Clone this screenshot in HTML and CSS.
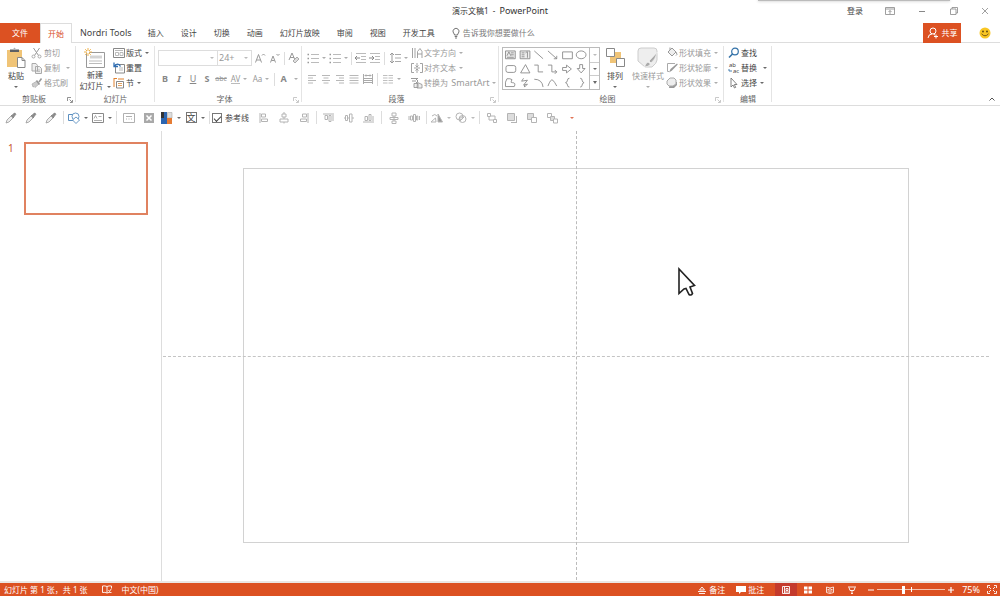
FILE: index.html
```html
<!DOCTYPE html>
<html lang="zh-CN">
<head>
<meta charset="utf-8">
<title>演示文稿1 - PowerPoint</title>
<link rel="stylesheet" href="styles.css">
</head>
<body>
<svg class="defs" aria-hidden="true">
  <symbol id="dropper" viewBox="0 0 12 12"><path d="M1 11l1-3 4-4 2 2-4 4z" fill="#eee" stroke="#999" stroke-width=".8"/><path d="M6 3l3 3M6.500 4L9 1.300q1.500-.5 1.800 1L8.300 5.500z" fill="#8a8a8a" stroke="#8a8a8a"/></symbol>
  <symbol id="bul" viewBox="0 0 12 12"><path d="M4 2.500h8M4 6.500h8M4 10.500h8" stroke="#bbb"/><path d="M.5 2.500H2M.5 6.500H2M.5 10.500H2" stroke="#999" stroke-width="1.400"/></symbol>
  <symbol id="indent" viewBox="0 0 12 12"><path d="M1 1.500h10M6 4.500h5M6 7.500h5M1 10.500h10" stroke="#bbb"/><path d="M0 6h5M3 4l2 2-2 2" stroke="#888" fill="none"/></symbol>
  <symbol id="outdent" viewBox="0 0 12 12"><path d="M1 1.500h10M6 4.500h5M6 7.500h5M1 10.500h10" stroke="#bbb"/><path d="M0 6h5M2 4L0 6l2 2" stroke="#888" fill="none"/></symbol>
  <symbol id="lsp" viewBox="0 0 12 12"><path d="M6 2.500h6M6 6h6M6 9.500h6" stroke="#aaa"/><path d="M3 1v10M1 3l2-2 2 2M1 9l2 2 2-2" stroke="#999" fill="none"/></symbol>
  <symbol id="al" viewBox="0 0 12 12"><path d="M2 2.500h8M2 5h5M2 7.500h8M2 10h5" stroke="#b0b0b0" stroke-width=".9"/></symbol>
  <symbol id="ac" viewBox="0 0 12 12"><path d="M2 2.500h8M3.500 5h5M2 7.500h8M3.500 10h5" stroke="#b0b0b0" stroke-width=".9"/></symbol>
  <symbol id="ar" viewBox="0 0 12 12"><path d="M2 2.500h8M5 5h5M2 7.500h8M5 10h5" stroke="#b0b0b0" stroke-width=".9"/></symbol>
  <symbol id="aj" viewBox="0 0 12 12"><path d="M1.500 2.500h9M1.500 5h9M1.500 7.500h9M1.500 10h9" stroke="#b0b0b0" stroke-width=".9"/></symbol>
  <symbol id="cols" viewBox="0 0 12 12"><path d="M1 2.500h4.500M1 5h4.500M1 7.500h4.500M1 10h4.500M6.500 2.500H11M6.500 5H11M6.500 7.500H11M6.500 10H11" stroke="#b8b8b8" stroke-width=".9"/></symbol>
  <symbol id="launch" viewBox="0 0 6 6"><path d="M.5 4V.5H4M2.500 2.500L5 5M5.500 3v2.500H3" fill="none" stroke="currentColor" stroke-width=".8"/></symbol>
</svg>
<div class="app">
  <header class="titlebar">
    <span class="top-shadow"></span>
    <h1>演示文稿1 &nbsp;-&nbsp; <span class="latin">PowerPoint</span></h1>
    <div class="window">
      <button class="login">登录</button>
      <button aria-label="功能区显示选项"><svg viewBox="0 0 10 8" width="10" height="8"><path d="M.5.5h9v7h-9zM.5 2h9M5 7V3.500M3.500 5L5 3.500 6.500 5" fill="none" stroke="#888" stroke-width=".8"/></svg></button>
      <button aria-label="最小化"><svg viewBox="0 0 8 8" width="8" height="8"><path d="M1 4.500h6" stroke="#888"/></svg></button>
      <button aria-label="还原"><svg viewBox="0 0 8 8" width="8" height="8"><path d="M.5 2h5.500v5.500H.5zM2 2V.5h5.500V6H6" fill="none" stroke="#888" stroke-width=".8"/></svg></button>
      <button class="close" aria-label="关闭"><svg viewBox="0 0 8 8" width="8" height="8"><path d="M1 1l6 6M7 1L1 7" stroke="#888" stroke-width=".8"/></svg></button>
    </div>
  </header>

  <nav class="tabs">
    <button class="tab file">文件</button>
    <button class="tab active">开始</button>
    <button class="tab nordri"><span class="latin">Nordri Tools</span></button>
    <button class="tab">插入</button>
    <button class="tab">设计</button>
    <button class="tab">切换</button>
    <button class="tab">动画</button>
    <button class="tab">幻灯片放映</button>
    <button class="tab">审阅</button>
    <button class="tab">视图</button>
    <button class="tab">开发工具</button>
    <button class="tell"><svg viewBox="0 0 8 12" width="8" height="12"><path d="M2.500 8Q2.500 7 1.500 6A3 3 0 1 1 6.500 6Q5.500 7 5.500 8zM2.700 9.500h2.600M3 11h2" fill="none" stroke="#666" stroke-width=".9"/></svg>告诉我你想要做什么</button>
    <button class="share"><svg viewBox="0 0 12 12" width="12" height="12"><circle cx="6" cy="4" r="3" fill="none" stroke="#fff"/><path d="M1 11q.5-4 4-4M6.500 7.200L8 8M7 9.500h4M9 7.500v4" fill="none" stroke="#fff"/></svg>共享</button>
    <button class="smile" aria-label="反馈"><svg viewBox="0 0 12 12" width="12" height="12"><circle cx="6" cy="6" r="5.500" fill="#f9c623"/><circle cx="4" cy="4.500" r=".9" fill="#574111"/><circle cx="8" cy="4.500" r=".9" fill="#574111"/><path d="M2.500 6.800q3.500 4 7 0" fill="none" stroke="#7b5a10"/></svg></button>
  </nav>

  <section class="ribbon">
    <div class="group clipboard">
      <div class="body">
        <button class="big paste"><svg viewBox="0 0 20 21" width="20" height="21"><path d="M1 3h15v17H1z" fill="#f0c477"/><path d="M4 5V2.500h3Q8.500-1 10 2.500h3V5z" fill="#5d6064"/><path d="M7 2h3" stroke="#fff"/><path d="M11.500 10.500h4.500l3 3v7h-7.500z" fill="#fff" stroke="#888"/><path d="M16 10.500v3h3" fill="none" stroke="#888"/></svg>粘贴<i class="caret"></i></button>
        <div class="rows">
          <button disabled><svg viewBox="0 0 12 12" width="12" height="12"><path d="M2.500 1l5 7.500M8.500 1l-5 7.500" stroke="#999" fill="none"/><circle cx="2.500" cy="9.500" r="1.500" fill="none" stroke="#aaa"/><circle cx="8.500" cy="9.500" r="1.500" fill="none" stroke="#aaa"/></svg>剪切</button>
          <button disabled><svg viewBox="0 0 12 12" width="12" height="12"><path d="M1 1.500h4l1.500 2V9H1zM4.500 4.500h4l2 2v5h-6z" fill="#eee" stroke="#aaa"/><path d="M6 8h3M6 9.500h3" stroke="#aaa" stroke-width=".7"/></svg>复制<i class="caret far"></i></button>
          <button disabled><svg viewBox="0 0 12 12" width="12" height="12"><path d="M1 7l5-3 2 3-4 3.500-1-1-1 .5z" fill="#ccc" stroke="#aaa" stroke-width=".7"/><path d="M5.500 3.500l3 4M8 5l2.500-3.500" stroke="#999" stroke-width="1.500"/></svg>格式刷</button>
        </div>
      </div>
      <footer>剪贴板<button class="launcher" aria-label="剪贴板选项"><svg width="6" height="6"><use href="#launch"/></svg></button></footer>
    </div>

    <div class="group slides">
      <div class="body">
        <button class="big new"><svg viewBox="0 0 22 21" width="22" height="21"><path d="M2.500 4.500h18v15h-18z" fill="#fff" stroke="#999"/><path d="M6 7.500h12v3H6z" fill="#d4d4d4"/><path d="M5 13h13M5 15.500h13" stroke="#bbb"/><path d="M4 0v8M0 4h8M1.200 1.200l5.600 5.600M6.800 1.200L1.200 6.800" stroke="#efb34e"/><circle cx="4" cy="4" r="1.300" fill="#fff"/></svg><span>新建<br>幻灯片<i class="caret inline"></i></span></button>
        <div class="rows">
          <button><svg viewBox="0 0 12 12" width="12" height="12"><path d="M.5 1.500h11v9H.5z" fill="#fff" stroke="#888"/><path d="M2 3.500h8M2.500 5.500h3v3h-3zM7 5.500h3v3H7z" stroke="#aaa" fill="none" stroke-width=".8"/></svg>版式<i class="caret"></i></button>
          <button><svg viewBox="0 0 12 12" width="12" height="12"><path d="M2.500 2.500h9v8.500h-9z" fill="#fff" stroke="#888"/><path d="M6 6h4M6 8h4" stroke="#bbb"/><path d="M1 .5v4h4M1.500 4Q5 0 7.500 4.500" fill="none" stroke="#2f6eb3" stroke-width="1.300"/></svg>重置</button>
          <button><svg viewBox="0 0 12 12" width="12" height="12"><path d="M3.500 4.500h7v6.500h-7z" fill="#fff" stroke="#888"/><path d="M5 6.500h4M5 8.500h4" stroke="#e0a060"/><path d="M1 1v9M1 1.500h3M5 2h6" stroke="#e0812f" fill="none"/></svg>节<i class="caret"></i></button>
        </div>
      </div>
      <footer>幻灯片</footer>
    </div>

    <div class="group font">
      <div class="body stack">
        <div class="line">
          <label class="combo name"><select aria-label="字体" disabled><option></option></select><i class="caret"></i></label>
          <label class="combo size"><select aria-label="字号" disabled><option>24+</option></select><i class="caret"></i></label>
          <button class="cell wide" disabled aria-label="增大字号"><svg viewBox="0 0 12 12" width="12" height="12"><path d="M1.500 10.500l3-8 3 8M2.500 8h4M8 3.500L9.500 2 11 3.500" fill="none" stroke="#999"/></svg></button>
          <button class="cell" disabled aria-label="减小字号"><svg viewBox="0 0 12 12" width="12" height="12"><path d="M1.500 10.500L4 4l2.500 6.500M2.500 8.500h3M7.500 2L9 3.500 10.500 2" fill="none" stroke="#999"/></svg></button>
          <i class="sep"></i>
          <button class="cell" disabled aria-label="清除格式"><svg viewBox="0 0 12 12" width="12" height="12"><path d="M1 8l3-7 3 7M2 5.500h4" stroke="#999" fill="none"/><path d="M5 9l4-4 2 2-4 4z" fill="#ddd" stroke="#999" stroke-width=".8"/></svg></button>
        </div>
        <div class="line second">
          <button class="cell" disabled><b>B</b></button>
          <button class="cell" disabled><b><em>I</em></b></button>
          <button class="cell" disabled><u>U</u></button>
          <button class="cell" disabled><b>S</b></button>
          <button class="cell" disabled><s class="tiny">abc</s></button>
          <button class="cell dd" disabled><span class="av">AV</span><i class="caret"></i></button>
          <button class="cell dd" disabled><span>Aa</span><i class="caret"></i></button>
          <i class="sep"></i>
          <button class="cell dd last" disabled><b>A</b><i class="caret"></i></button>
        </div>
      </div>
      <footer>字体<button class="launcher off" aria-label="字体选项"><svg width="6" height="6"><use href="#launch"/></svg></button></footer>
    </div>

    <div class="group para">
      <div class="body">
        <div class="stack">
          <div class="line">
            <button class="cell dd" disabled aria-label="项目符号"><svg width="12" height="12"><use href="#bul"/></svg><i class="caret"></i></button>
            <button class="cell dd" disabled aria-label="编号"><svg width="12" height="12"><use href="#bul"/></svg><i class="caret"></i></button>
            <i class="sep"></i>
            <button class="cell" disabled aria-label="减少缩进"><svg width="12" height="12"><use href="#outdent"/></svg></button>
            <button class="cell" disabled aria-label="增加缩进"><svg width="12" height="12"><use href="#indent"/></svg></button>
            <i class="sep"></i>
            <button class="cell dd" disabled aria-label="行距"><svg width="12" height="12"><use href="#lsp"/></svg><i class="caret"></i></button>
          </div>
          <div class="line second">
            <button class="cell" disabled aria-label="左对齐"><svg width="12" height="12"><use href="#al"/></svg></button>
            <button class="cell" disabled aria-label="居中"><svg width="12" height="12"><use href="#ac"/></svg></button>
            <button class="cell" disabled aria-label="右对齐"><svg width="12" height="12"><use href="#ar"/></svg></button>
            <button class="cell" disabled aria-label="两端对齐"><svg width="12" height="12"><use href="#aj"/></svg></button>
            <button class="cell" disabled aria-label="分散对齐"><svg viewBox="0 0 12 12" width="12" height="12"><path d="M1 5.500h10M1 7.500h10M1 9.500h10M1.500 1v10M10.500 1v10M3 2.500h6M4 1.500l-1 1 1 1M8 1.500l1 1-1 1" stroke="#aaa" fill="none"/></svg></button>
            <i class="sep"></i>
            <button class="cell dd" disabled aria-label="分栏"><svg width="12" height="12"><use href="#cols"/></svg><i class="caret"></i></button>
          </div>
        </div>
        <div class="rows">
          <button disabled><svg viewBox="0 0 12 12" width="12" height="12"><path d="M1.500 1v10M4 1v10M6.500 11V4.500L9 1.500l2 3V11M6.500 7H11" fill="none" stroke="#999" stroke-width=".9"/></svg>文字方向<i class="caret"></i></button>
          <button disabled><svg viewBox="0 0 12 12" width="12" height="12"><path d="M3 1.500H.5v9H3M9 1.500h2.500v9H9M6 1v4M4.500 3.500L6 5l1.500-1.500M6 11V7M4.500 8.500L6 7l1.500 1.500M3 6h6" fill="none" stroke="#999" stroke-width=".9"/></svg>对齐文本<i class="caret"></i></button>
          <button disabled><svg viewBox="0 0 12 12" width="12" height="12"><path d="M0 1.500h7M1 4h4M5 2l2 2-2 2" fill="none" stroke="#999"/><path d="M3 6.500h4v4H3zM6.500 5.500L11 7.500v3.500H6z" fill="#eee" stroke="#999" stroke-width=".9"/></svg>转换为 <span class="latin">&nbsp;SmartArt</span><i class="caret"></i></button>
        </div>
      </div>
      <footer>段落<button class="launcher off" aria-label="段落选项"><svg width="6" height="6"><use href="#launch"/></svg></button></footer>
    </div>

    <div class="group draw">
      <div class="body">
        <div class="gallery">
          <svg class="shapes" viewBox="0 0 88 42" fill="none" stroke="#888" stroke-width=".9"><path d="M2.500 3h10v8h-10z" fill="#eee"/><path d="M4 8l2-4 2 4M8 5h3M8 7h3M4 9.500h7"/><path d="M17.500 3h10v8h-10z" fill="#eee"/><path d="M19 5h3M19 7h3M19 9h3M25 4v6M23 5l2-1.500"/><path d="M32 3l9 8M46 3l9 8M55 8v3h-3"/><path d="M61 4h10v7H61z"/><ellipse cx="80" cy="7" rx="5" ry="4"/><rect x="3" y="18" width="10" height="7" rx="2"/><path d="M18 25.500l5-8.500 4.500 8.500zM32 17.500h4v7h5M46 17.500h4v7h5M53 22.500l2 2-2 2M61 20h4v-2.500l5 4-5 4V23h-4zM78.500 17h3v4h2.500l-4 4.500-4-4.500h2.500z"/><path d="M7 31.500H4L2.500 35v4.500h9q2-4-2-4-2 0-1-1.500 2-2-1.500-2.500zM21 31l-2 3 6-1-4 5 4-1-3 3v-2M32 32q8 0 9 8M46 39q3-8 5-6t4 6M68 31q-2 0-2 2t-2 2.500q2 .5 2 2.500t2 2M79 31q2 0 2 2t2 2.500q-2 .5-2 2.500t-2 2"/></svg>
          <div class="scroll"><button aria-label="上一行"><i class="caret dim"></i></button><button aria-label="下一行"><i class="caret"></i></button><button aria-label="更多"><i class="caret more"></i></button></div>
        </div>
        <button class="big arrange"><svg viewBox="0 0 20 21" width="20" height="21"><path d="M5 5h11v11H5z" fill="#f0c477"/><path d="M1.500 1.500h8v8h-8zM11.500 11.500h8v8h-8z" fill="#fff" stroke="#888"/></svg>排列<i class="caret"></i></button>
        <button class="big quick" disabled><svg viewBox="0 0 22 21" width="22" height="21"><path d="M4 1h13q3 0 3 3v9q0 3-5 7H8L1 14V4q0-3 3-3z" fill="#eee" stroke="#ccc"/><path d="M20.500 5L12 14l2 2q4-3 6.500-11zM11 15l2.500 2q-2 3-6 3 1-4 3.500-5z" fill="#aaa" stroke="#fff" stroke-width=".6"/></svg>快速样式<i class="caret"></i></button>
        <div class="rows">
          <button disabled><svg viewBox="0 0 12 12" width="12" height="12"><path d="M2 5l4-4 4 4-4 4zM4 3V.5" fill="#eee" stroke="#999"/><path d="M10 5q2 3 0 3.500" stroke="#999" fill="none"/></svg>形状填充<i class="caret"></i></button>
          <button disabled><svg viewBox="0 0 12 12" width="12" height="12"><path d="M9 1.500H1.500v8H3" fill="none" stroke="#aaa"/><path d="M3 10.500l1.500-3.500L11 1.500l.8 1L6 8.500z" fill="#999"/></svg>形状轮廓<i class="caret"></i></button>
          <button disabled><svg viewBox="0 0 12 12" width="12" height="12"><path d="M4 5h7v3l-3 3H3z" fill="#999"/><path d="M4 1h4l2 2v4L7 9H3L1 7V4z" fill="#eee" stroke="#aaa"/></svg>形状效果<i class="caret"></i></button>
        </div>
      </div>
      <footer>绘图<button class="launcher off" aria-label="绘图选项"><svg width="6" height="6"><use href="#launch"/></svg></button></footer>
    </div>

    <div class="group edit">
      <div class="body">
        <div class="rows">
          <button><svg viewBox="0 0 12 12" width="12" height="12"><circle cx="7" cy="4.500" r="3.300" fill="none" stroke="#3472a8" stroke-width="1.200"/><path d="M4.500 7L1 10.500" stroke="#3472a8" stroke-width="1.600"/></svg>查找</button>
          <button><svg viewBox="0 0 12 12" width="12" height="12"><text x="1" y="5" class="mini">ab</text><text x="5" y="11" class="mini">ac</text><path d="M1 7v2h3" fill="none" stroke="#3472a8" stroke-width=".9"/></svg>替换<i class="caret far"></i></button>
          <button><svg viewBox="0 0 12 12" width="12" height="12"><path d="M3 1v9l2-2 1.500 3 1.200-.6L6.300 7.500H9z" fill="#fff" stroke="#777" stroke-width=".9"/></svg>选择<i class="caret"></i></button>
        </div>
      </div>
      <footer>编辑</footer>
    </div>
    <button class="collapse" aria-label="折叠功能区"><svg viewBox="0 0 6 4" width="6" height="4"><path d="M.5 3.500L3 1l2.500 2.500" fill="none" stroke="#555"/></svg></button>
  </section>

  <section class="quickbar">
    <button class="q" aria-label="取色一"><svg width="12" height="12"><use href="#dropper"/></svg></button>
    <button class="q" aria-label="取色二"><svg width="12" height="12"><use href="#dropper"/></svg></button>
    <button class="q" aria-label="取色三"><svg width="12" height="12"><use href="#dropper"/></svg></button>
    <i class="sep"></i>
    <button class="q dd" aria-label="形状"><svg viewBox="0 0 12 12" width="12" height="12"><path d="M.5 2.500h6v6h-6z" fill="#fff" stroke="#5b8fc0"/><circle cx="7.500" cy="4.500" r="3.500" fill="#fff" stroke="#5b8fc0" stroke-width=".9"/><path d="M8 5l3.500 3L8 11.500 4.500 8z" fill="#fff" stroke="#5b8fc0" stroke-width=".9"/></svg><i class="caret"></i></button>
    <button class="q dd" aria-label="文本框"><svg viewBox="0 0 12 12" width="12" height="12"><path d="M.5 1.500h11v9H.5z" fill="#fff" stroke="#888"/><path d="M2 6.500l1.500-3L5 6.500M6.500 4.500h3M2 8.500h8" fill="none" stroke="#999" stroke-width=".8"/></svg><i class="caret"></i></button>
    <i class="sep"></i>
    <button class="q" aria-label="占位符"><svg viewBox="0 0 12 12" width="12" height="12"><path d="M.5 1.500h11v9H.5zM3 4.500h6M3 7h1M5.500 7h1M8 7h1" fill="#fff" stroke="#b0b0b0"/></svg></button>
    <button class="q" aria-label="删除"><svg viewBox="0 0 12 12" width="12" height="12"><path d="M1 1h10v10H1z" fill="#a9a9a9"/><path d="M3.500 3.500l5 5M8.500 3.500l-5 5" stroke="#fff" stroke-width="1.500"/></svg></button>
    <button class="q dd" aria-label="主题颜色"><svg viewBox="0 0 12 12" width="12" height="12"><path d="M0 0h6v12H0z" fill="#2c65b0"/><path d="M0 0h3v6H0z" fill="#333"/><path d="M6.500.5h4.500V6H6.500z" fill="#ddd" stroke="#aaa" stroke-width=".6"/><path d="M6 6h5v6H6z" fill="#e57c35"/></svg><i class="caret"></i></button>
    <button class="q dd" aria-label="主题字体"><span class="boxed">文</span><i class="caret"></i></button>
    <i class="sep"></i>
    <label class="check"><input type="checkbox" checked>参考线</label>
    <button class="q" aria-label="左对齐"><svg viewBox="0 0 12 12" width="12" height="12" class="g"><path d="M2 1v10M3.500 2h4v3h-4zM3.500 7h6v2.500h-6z"/></svg></button>
    <button class="q" aria-label="水平居中"><svg viewBox="0 0 12 12" width="12" height="12" class="g"><path d="M4 2h4v3H4zM2 7h8v3H2zM6 0v2M6 5v2M6 10v1.500"/></svg></button>
    <button class="q" aria-label="右对齐"><svg viewBox="0 0 12 12" width="12" height="12" class="g"><path d="M10 1v10M4.500 2h4v3h-4zM2.500 7h6v2.500h-6z"/></svg></button>
    <i class="sep"></i>
    <button class="q" aria-label="顶端对齐"><svg viewBox="0 0 12 12" width="12" height="12" class="g"><path d="M0 2h11M2 3.500h2.500v4H2zM6 3.500h2v6H6zM10 3v6"/></svg></button>
    <button class="q" aria-label="垂直居中"><svg viewBox="0 0 12 12" width="12" height="12" class="g"><path d="M2.500 3.500h2v5h-2zM6.500 2H9v8H6.500zM1 6h1.500M4.500 6h2M9 6h2"/></svg></button>
    <button class="q" aria-label="底端对齐"><svg viewBox="0 0 12 12" width="12" height="12" class="g"><path d="M0 10h11M2 4.500h2.500v4H2zM6 2.500h2v6H6zM10 4v5"/></svg></button>
    <i class="sep"></i>
    <button class="q" aria-label="纵向分布"><svg viewBox="0 0 12 12" width="12" height="12" class="g"><path d="M4 1h4v3H4zM2 5.500h8v2H2zM4 9h4v2.500H4zM6 4v5"/></svg></button>
    <button class="q" aria-label="横向分布"><svg viewBox="0 0 12 12" width="12" height="12" class="g"><path d="M1 4v4M2.500 4h2v4h-2zM5.500 2.500h2v7h-2zM8.500 4h1.300v4H8.500zM11.500 4v4"/></svg></button>
    <i class="sep"></i>
    <button class="q dd" aria-label="旋转"><svg viewBox="0 0 12 12" width="12" height="12" class="g"><path d="M0 10h5L4.500 6zM1 4q3-3 5 0"/><path d="M7 10V2l4.500 8z" fill="#999"/></svg><i class="caret off"></i></button>
    <button class="q dd" aria-label="合并形状"><svg viewBox="0 0 12 12" width="12" height="12" class="g"><circle cx="4.500" cy="4.500" r="3.500"/><circle cx="7.500" cy="7" r="3.500"/><path d="M4 7l4-3M5 9l4-4"/></svg><i class="caret off"></i></button>
    <i class="sep"></i>
    <button class="q" aria-label="组合"><svg viewBox="0 0 12 12" width="12" height="12" class="g"><path d="M1.500 1.500h3v3h-3zM7.500 7.500h3v3h-3zM5 4h4v3M3 5v3h4"/></svg></button>
    <button class="q" aria-label="置于顶层"><svg viewBox="0 0 12 12" width="12" height="12" class="g"><path d="M1.500 1.500h7v7h-7z" fill="#ddd"/><path d="M10.500 4v6.500H5M8 10.500h3"/></svg></button>
    <button class="q" aria-label="上移一层"><svg viewBox="0 0 12 12" width="12" height="12" class="g"><path d="M1.500 1.500h6v6h-6z" fill="#ddd"/><path d="M5.500 5.500h5v5h-5z" fill="#fff"/></svg></button>
    <button class="q" aria-label="取消组合"><svg viewBox="0 0 12 12" width="12" height="12" class="g"><path d="M1.500 1.500h4v4h-4z"/><path d="M4.500 4.500h4v4h-4z" fill="#ddd"/><path d="M7.500 7h4v4h-4z" fill="#fff"/></svg></button>
    <button class="q more-tools" aria-label="自定义"><i class="caret red"></i></button>
  </section>

  <main class="work">
    <aside class="thumbs"><span class="num">1</span><button class="thumb" aria-label="幻灯片 1"></button></aside>
    <section class="canvas">
      <div class="stage">
        <div class="slide"></div>
        <i class="guide h"></i><i class="guide v"></i>
        <svg class="pointer" viewBox="0 0 20 30" width="20" height="30"><path d="M2 2v24.500l5-4.500 2-.5 3 6q2 1.500 3.500-1L13 20l4.500-1.500z" fill="#fff" stroke="#222" stroke-width="1.600"/></svg>
      </div>
    </section>
  </main>

  <footer class="status">
    <span>幻灯片 第 1 张，共 1 张</span>
    <button class="spell" aria-label="拼写检查"><svg viewBox="0 0 10 9" width="10" height="9"><path d="M5 1.500Q3 .5.500 1v6.500Q3 7 5 8zM5 1.500Q7 .5 9.500 1v2M5 8q2-1 4.500-.5M6.500 5l1 1.500 2-3" fill="none" stroke="#fff" stroke-width=".9"/></svg></button>
    <button>中文(中国)</button>
    <div class="right">
      <button class="note"><svg viewBox="0 0 8 8" width="8" height="8"><path d="M4 1L1.500 4h5zM0 5.500h8M1 7.500h6" stroke="#fff" fill="none" stroke-width=".9"/></svg>备注</button>
      <button class="note"><svg viewBox="0 0 10 8" width="10" height="8"><path d="M0 0h10v6H5L3 8V6H0z" fill="#fff"/></svg>批注</button>
      <div class="views">
        <button class="on" aria-label="普通视图"><svg viewBox="0 0 8 8" width="8" height="8"><path d="M.5.5h7v7h-7zM2.500 1v6M4 2.500h2v2H4zM3 6h4" stroke="#fff" fill="none" stroke-width=".9"/></svg></button>
        <button aria-label="幻灯片浏览"><svg viewBox="0 0 8 8" width="8" height="8"><path d="M0 .5h3.500v3H0zM4.500.5H8v3H4.500zM0 4.500h3.500v3H0zM4.500 4.500H8v3H4.500z" fill="#fff"/></svg></button>
        <button aria-label="阅读视图"><svg viewBox="0 0 8 8" width="8" height="8"><path d="M.5 1L4 2l3.500-1v5.500L4 7.500.5 6.500zM4 2v5M1.500 3.500H3M1.500 5H3M5 3.500h1.500M5 5h1.500" stroke="#fff" fill="none" stroke-width=".8"/></svg></button>
        <button aria-label="幻灯片放映"><svg viewBox="0 0 8 8" width="8" height="8"><path d="M0 1h8M1 1.500l1 3h4l1-3M4 4.500V7M3 7.500h2" stroke="#fff" fill="none" stroke-width=".9"/></svg></button>
      </div>
      <button class="step" aria-label="缩小"><svg viewBox="0 0 6 6" width="6" height="6"><path d="M0 3h6" stroke="#fff"/></svg></button>
      <input class="zoom" type="range" aria-label="缩放" min="0" max="200" value="75">
      <button class="step" aria-label="放大"><svg viewBox="0 0 6 6" width="6" height="6"><path d="M0 3h6M3 0v6" stroke="#fff" stroke-width="1.200"/></svg></button>
      <button class="pct latin">75%</button>
      <button class="fit" aria-label="适应窗口"><svg viewBox="0 0 10 9" width="10" height="9"><path d="M.5 3V.5H3M7 .5h2.500V3M9.500 6v2.500H7M3 8.500H.5V6M2 2l2 2M8 2L6 4M2 7l2-2M8 7L6 5" stroke="#fff" fill="none" stroke-width=".9"/></svg></button>
    </div>
  </footer>
</div>
</body>
</html>
```
FILE: styles.css
```css
* { box-sizing: border-box; }
body { margin: 0; background: #fff; color: #444; font: 8px/12px "Noto Sans", "Noto Sans CJK SC", sans-serif; }
button, select, input { font: inherit; color: inherit; }
button { display: flex; align-items: center; justify-content: center; padding: 0; border: 0; background: none; white-space: nowrap; }
button:disabled { color: #999; }
svg { flex: none; display: block; }
.defs { position: absolute; width: 0; height: 0; }
.latin { font-size: 9px; }
.app { display: grid; grid-template-rows: 23px 20px 63px 25px 1fr 13px; height: 100vh; overflow: hidden; }

.caret { flex: none; width: 4px; height: 2px; border: 2px solid transparent; border-top-color: currentColor; border-bottom: 0; opacity: .8; }
.caret.off, .caret.dim { color: #aaa; }
.caret.red { color: #d9502a; }
.caret.more { border-top-width: 3px; }
.caret.inline { display: inline-block; margin-left: 3px; vertical-align: middle; }
.sep { flex: none; width: 5px; height: 13px; background: linear-gradient(#ddd, #ddd) center / 1px 100% no-repeat; }

.titlebar { position: relative; display: grid; grid-template-columns: 1fr auto 1fr; align-items: center; padding-bottom: 2px; }
.titlebar h1 { grid-column: 2; margin: 0; font-size: 8px; font-weight: 400; color: #333; }
.top-shadow { position: absolute; top: 0; right: 50px; width: 192px; height: 1px; background: #bbb; box-shadow: 0 0 3px #999; }
.window { display: flex; justify-content: flex-end; }
.window button { width: 32px; height: 21px; }
.window .login { width: 38px; }
.window .close { width: 30px; }

.tabs { display: flex; gap: 1px; border-bottom: 1px solid #ddd; }
.tab { height: 20px; padding: 0 8px; }
.tab.file { width: 40px; color: #fff; background: #dc5122; }
.tab.active { margin-left: -1px; padding: 0 7px; color: #d9502a; background: #fff; border: 1px solid #ddd; border-bottom: 0; }
.tab.nordri { padding: 0 7px; }
.tell { gap: 3px; margin-left: 8px; color: #777; }
.share { gap: 3px; width: 38px; height: 20px; margin-left: auto; color: #fff; background: #dc5122; }
.smile { width: 20px; margin: 0 5px 0 13px; }

.ribbon { display: flex; border-bottom: 1px solid #ddd; position: relative; }
.group { display: flex; flex-direction: column; padding: 2px 1px 0 3px; background: linear-gradient(#e4e4e4, #e4e4e4) right 3px / 1px 56px no-repeat; }
.body { display: flex; height: 48px; }
.group footer { position: relative; padding-right: 10px; text-align: center; color: #666; }
.launcher { position: absolute; right: 2px; top: 4px; color: #777; }
.launcher.off { color: #bbb; }
.clipboard { width: 76px; }
.slides { width: 79px; }
.slides footer, .edit footer { padding-right: 2px; }
.font { width: 147px; }
.para { width: 197px; }
.draw { width: 225px; }
.edit { width: 48px; }
.rows { display: grid; grid-template-rows: repeat(3, 15px); justify-items: start; }
.rows button { gap: 1px; height: 15px; }
.rows .caret { margin-left: 2px; }
.rows .caret.far { margin-left: 5px; }
.big { flex-direction: column; justify-content: flex-start; line-height: 11px; padding-top: 2px; }
.big.paste { width: 26px; margin-right: 2px; gap: 2px; }
.big > .caret { margin-top: 3px; }
.big.new { width: 32px; margin-right: 2px; padding-top: 3px; }
.big.arrange { width: 30px; gap: 2px; }
.big.quick { width: 36px; gap: 2px; }
.edit .body { padding-left: 1px; }

.stack { display: flex; flex-direction: column; }
.line { display: flex; align-items: center; height: 26px; }
.line.second { height: 16px; }
.cell { flex: none; width: 14px; height: 16px; }
.cell.wide { width: 16px; }
.cell.dd { width: 22px; gap: 3px; }
.cell b, .cell u { font-size: 9px; color: #888; }
.cell.last { width: 24px; gap: 7px; }
.tiny { font-size: 7px; }
.av { border-bottom: 1px solid #bbb; line-height: 9px; }
.combo { flex: none; display: flex; align-items: center; height: 16px; border: 1px solid #ddd; padding-right: 3px; color: #aaa; }
.combo select { flex: 1; min-width: 0; height: 14px; padding: 0; border: 0; appearance: none; background: none; font-size: 9px; color: #999; opacity: 1; }
.combo.name { width: 60px; }
.combo.size { width: 35px; margin-left: -1px; padding-left: 1px; }
.para .stack { width: 106px; }

.gallery { display: flex; width: 98px; height: 43px; margin: 2px 0 0; border: 1px solid #bbb; }
.shapes { width: 86px; height: 41px; }
.scroll { flex: 1; display: grid; grid-template-rows: repeat(3, 1fr); border-left: 1px solid #bbb; }
.scroll button + button { border-top: 1px solid #ccc; }
.mini { font-size: 6px; fill: #444; }
.collapse { position: absolute; right: 4px; bottom: 3px; width: 8px; height: 6px; }

.quickbar { display: flex; align-items: center; padding: 0 0 2px 1px; }
.q { width: 20px; height: 20px; }
.q.dd { width: 24px; gap: 4px; }
.g { fill: none; stroke: #b4b4b4; stroke-width: 1; }
.boxed { width: 11px; height: 11px; border: 1px solid #777; line-height: 9px; font-size: 9px; }
.check { display: flex; align-items: center; gap: 3px; margin-right: 5px; }
.check input { appearance: none; width: 10px; height: 10px; margin: 0; border: 1px solid #777; display: grid; place-items: center; }
.check input:checked::after { content: ""; width: 6px; height: 3px; border: solid #444; border-width: 0 0 1px 1px; transform: rotate(-45deg); }

.work { display: grid; grid-template-columns: 162px 1fr; min-height: 0; border-bottom: 2px solid #ebe6e3; }
.thumbs { display: flex; align-items: flex-start; gap: 10px; padding: 11px 13px 0 8px; border-right: 1px solid #ddd; }
.num { width: 6px; font-size: 10px; color: #c8542f; }
.thumb { flex: 1; height: 73px; border: 2px solid #e08260; background: #fff; }
.canvas { padding: 0 11px 1px 1px; min-height: 0; }
.stage { position: relative; height: 100%; display: grid; place-items: center; }
.slide { width: 80.6%; aspect-ratio: 16 / 9; border: 1px solid #d2d2d2; }
.guide { position: absolute; }
.guide.h { left: 0; right: 0; top: 50%; border-top: 1px dashed #c4c4c4; }
.guide.v { top: 0; bottom: 0; left: 50%; border-left: 1px dashed #bbb; }
.pointer { position: absolute; left: 62.2%; top: 30.3%; }

.status { display: flex; align-items: center; padding: 0 3px 0 4px; color: #fff; background: #dc5122; white-space: nowrap; }
.spell { margin: 0 10px 0 14px; }
.right { display: flex; align-items: center; margin-left: auto; }
.note { gap: 3px; margin-right: 11px; }
.note + .note { gap: 2px; }
.views { display: flex; }
.views button { width: 22px; height: 13px; }
.views .on { background: #c43a2c; }
.step { width: 8px; height: 12px; }
.views + .step { margin-left: 4px; }
.zoom { appearance: none; width: 68px; height: 11px; margin: 0 2px; background: linear-gradient(#fff, #fff) center / 1px 5px no-repeat, linear-gradient(#f3c3b0, #f3c3b0) center / 100% 1px no-repeat; }
.zoom::-webkit-slider-thumb { appearance: none; width: 3px; height: 8px; background: #fff; }
.pct { margin: 0 7px; }
```
